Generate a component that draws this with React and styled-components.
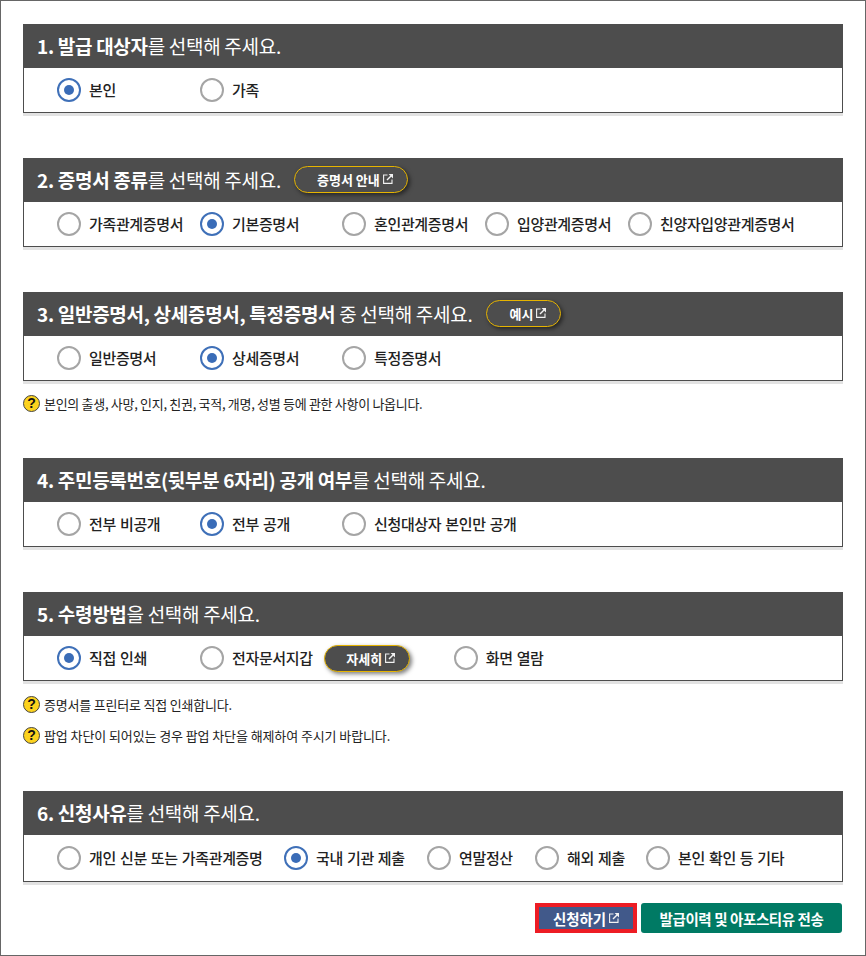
import React from "react";
import styled, { createGlobalStyle } from "styled-components";

const GlobalStyle = createGlobalStyle`
  html, body {
    margin: 0;
    padding: 0;
    background: #fff;
  }
  body {
    font-family: "Noto Sans CJK KR", "Noto Sans", sans-serif;
    color: #222;
  }
`;

const Page = styled.div`
  box-sizing: border-box;
  width: 866px;
  height: 956px;
  border: 1px solid #666;
  padding: 23px 22px 0;
`;

const Section = styled.section`
  margin-bottom: ${props => props.$gap}px;
`;

const Header = styled.div`
  box-sizing: border-box;
  display: flex;
  align-items: center;
  height: 44px;
  padding: 0 0 2px 14px;
  background: #4d4d4d;
  color: #fff;
`;

const Title = styled.h2`
  margin: 0;
  font-size: 19px;
  font-weight: 400;
  letter-spacing: -0.3px;
  white-space: nowrap;

  b {
    font-weight: 700;
  }
`;

const Body = styled.div`
  box-sizing: border-box;
  display: flex;
  align-items: center;
  height: ${props => props.$height || 45}px;
  padding-left: 33px;
  background: #fff;
  border: 1px solid #4d4d4d;
  border-top: none;
  box-shadow: 0 3px 0 #e2e2e2;
`;

const Option = styled.label`
  display: flex;
  align-items: center;
  flex: 0 0 auto;
  width: ${props => (props.$width ? `${props.$width}px` : "auto")};
  font-size: 15px;
  font-weight: 500;
  letter-spacing: -0.35px;
  word-spacing: 1px;
  color: #222;
  white-space: nowrap;
`;

const OptionText = styled.span`
  margin-bottom: 2px;
`;

const Circle = styled.span`
  box-sizing: border-box;
  display: flex;
  align-items: center;
  justify-content: center;
  width: 24px;
  height: 24px;
  margin-right: 8px;
  border-radius: 50%;
  border: 2px solid ${props => (props.$on ? "#3f70b8" : "#a5a5a5")};
  background: #fff;

  &::after {
    content: "";
    display: ${props => (props.$on ? "block" : "none")};
    width: 10px;
    height: 10px;
    border-radius: 50%;
    background: #3a6cb7;
  }
`;

const Pill = styled.span`
  box-sizing: border-box;
  display: inline-flex;
  align-items: center;
  justify-content: center;
  gap: 3px;
  flex: 0 0 auto;
  width: ${props => props.$width}px;
  height: 27px;
  margin-left: ${props => props.$left}px;
  margin-right: ${props => props.$right || 0}px;
  padding-left: 8px;
  border: 1px solid #e6b400;
  border-radius: 14px;
  background: #4d4d4d;
  box-shadow: 2px 2px 4px rgba(0, 0, 0, 0.5);
  color: #fff;
  font-size: 13px;
  font-weight: 700;
  white-space: nowrap;
`;

const Note = styled.p`
  display: flex;
  align-items: center;
  gap: 4px;
  height: 18px;
  margin: ${props => props.$top}px 0 0 0;
  font-size: 13px;
  letter-spacing: ${props => props.$spacing}px;
  color: #222;
`;

const Hint = styled.span`
  box-sizing: border-box;
  display: flex;
  align-items: center;
  justify-content: center;
  width: 17px;
  height: 17px;
  border-radius: 50%;
  border: 1px solid #444;
  background: #fcd21e;
  color: #111;
  font-family: "Liberation Sans", sans-serif;
  font-size: 14px;
  font-weight: 700;
`;

const Actions = styled.div`
  display: flex;
  justify-content: flex-end;
  align-items: center;
  gap: 4px;
  margin-right: 1px;
`;

const ApplyButton = styled.button`
  box-sizing: border-box;
  display: flex;
  align-items: center;
  justify-content: center;
  gap: 3px;
  width: 102px;
  height: 30px;
  border: 4px solid #ed1c24;
  background: #41598a;
  color: #fff;
  font-family: inherit;
  font-size: 14.5px;
  font-weight: 700;
  letter-spacing: -0.1px;
`;

const SendButton = styled.button`
  box-sizing: border-box;
  width: 201px;
  height: 30px;
  border: none;
  border-radius: 3px;
  background: #007a64;
  color: #fff;
  font-family: inherit;
  font-size: 14.5px;
  font-weight: 700;
  letter-spacing: -0.4px;
  white-space: nowrap;
`;

const LinkIcon = () => (
  <svg width="10" height="10" viewBox="0 0 10 10" fill="none" stroke="#f2f2f2" strokeWidth="1.1">
    <path d="M4.5 1H.6V9.4H9V5.5" />
    <path d="M5.6 0H10V4.4Z" fill="#f2f2f2" strokeWidth="0" />
    <path d="M8 2L4 6" strokeWidth="1.5" />
  </svg>
);

const Radio = ({ label, on, width }) => (
  <Option $width={width}>
    <Circle $on={on} />
    <OptionText>{label}</OptionText>
  </Option>
);

const App = () => (
  <Page>
    <GlobalStyle />

    <Section $gap={45}>
      <Header>
        <Title><b>1. 발급 대상자</b>를 선택해 주세요.</Title>
      </Header>
      <Body>
        <Radio label="본인" on width={143} />
        <Radio label="가족" />
      </Body>
    </Section>

    <Section $gap={45}>
      <Header>
        <Title><b>2. 증명서 종류</b>를 선택해 주세요.</Title>
        <Pill $width={114} $left={13}>증명서 안내 <LinkIcon /></Pill>
      </Header>
      <Body>
        <Radio label="가족관계증명서" width={143} />
        <Radio label="기본증명서" on width={142} />
        <Radio label="혼인관계증명서" width={143} />
        <Radio label="입양관계증명서" width={143} />
        <Radio label="친양자입양관계증명서" />
      </Body>
    </Section>

    <Section $gap={46}>
      <Header>
        <Title><b>3. 일반증명서, 상세증명서, 특정증명서</b> 중 선택해 주세요.</Title>
        <Pill $width={75} $left={14}>예시 <LinkIcon /></Pill>
      </Header>
      <Body>
        <Radio label="일반증명서" width={143} />
        <Radio label="상세증명서" on width={142} />
        <Radio label="특정증명서" />
      </Body>
      <Note $top={13} $spacing={-0.3}><Hint>?</Hint>본인의 출생, 사망, 인지, 친권, 국적, 개명, 성별 등에 관한 사항이 나옵니다.</Note>
    </Section>

    <Section $gap={45}>
      <Header>
        <Title><b>4. 주민등록번호(뒷부분 6자리) 공개 여부</b>를 선택해 주세요.</Title>
      </Header>
      <Body>
        <Radio label="전부 비공개" width={143} />
        <Radio label="전부 공개" on width={142} />
        <Radio label="신청대상자 본인만 공개" />
      </Body>
    </Section>

    <Section $gap={47}>
      <Header>
        <Title><b>5. 수령방법</b>을 선택해 주세요.</Title>
      </Header>
      <Body>
        <Radio label="직접 인쇄" on width={143} />
        <Radio label="전자문서지갑" />
        <Pill $width={86} $left={11} $right={44}>자세히 <LinkIcon /></Pill>
        <Radio label="화면 열람" />
      </Body>
      <Note $top={14} $spacing={-0.2}><Hint>?</Hint>증명서를 프린터로 직접 인쇄합니다.</Note>
      <Note $top={13} $spacing={-0.1}><Hint>?</Hint>팝업 차단이 되어있는 경우 팝업 차단을 해제하여 주시기 바랍니다.</Note>
    </Section>

    <Section $gap={21}>
      <Header>
        <Title><b>6. 신청사유</b>를 선택해 주세요.</Title>
      </Header>
      <Body $height={47}>
        <Radio label="개인 신분 또는 가족관계증명" width={227} />
        <Radio label="국내 기관 제출" on width={143} />
        <Radio label="연말정산" width={108} />
        <Radio label="해외 제출" width={111} />
        <Radio label="본인 확인 등 기타" />
      </Body>
    </Section>

    <Actions>
      <ApplyButton>신청하기 <LinkIcon /></ApplyButton>
      <SendButton>발급이력 및 아포스티유 전송</SendButton>
    </Actions>
  </Page>
);

export default App;
